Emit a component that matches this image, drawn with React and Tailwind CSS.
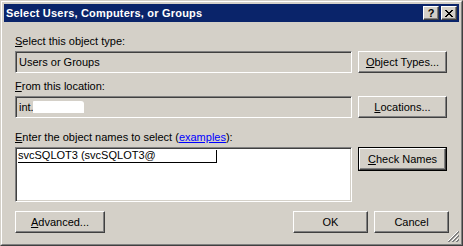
const raised =
  "border border-t-white border-l-white border-r-[#404040] border-b-[#404040] shadow-[inset_-1px_-1px_#808080] bg-[#d4d0c8]";
const sunken =
  "border border-t-[#808080] border-l-[#808080] border-r-white border-b-white shadow-[inset_1px_1px_#404040,inset_-1px_-1px_#d4d0c8]";

const Key = ({ children }) => <span className="underline underline-offset-[1px]">{children}</span>;

const Button = ({ children, className = "" }) => (
  <button
    type="button"
    className={`${raised} h-[22px] flex items-center justify-center text-black ${className}`}
  >
    {children}
  </button>
);

const CaptionButton = ({ children }) => (
  <div className={`${raised} w-[16px] h-[14px] flex items-center justify-center`}>{children}</div>
);

export default function App() {
  return (
    <div className="w-[463px] h-[246px] bg-[#d4d0c8] font-['Liberation_Sans',Arial,sans-serif] text-[11px] leading-[13px] text-black select-none">
      {/* window frame */}
      <div className="w-full h-full border border-t-[#d4d0c8] border-l-[#d4d0c8] border-r-[#404040] border-b-[#404040]">
        <div className="w-full h-full border border-t-white border-l-white border-r-[#808080] border-b-[#808080] p-[2px] flex flex-col">
          {/* Title bar */}
          <div className="h-[18px] bg-[#0a246a] flex items-center pl-[2px] pr-[2px]">
            <span className="text-white font-bold text-[11px] tracking-[0.2px]">
              Select Users, Computers, or Groups
            </span>
            <div className="ml-auto flex gap-[2px]">
              <CaptionButton>
                <span className="font-bold text-[11px] leading-none mt-[1px]">?</span>
              </CaptionButton>
              <CaptionButton>
                <svg width="8" height="7" viewBox="0 0 8 7" shapeRendering="crispEdges">
                  <path
                    d="M0 0h2v1H0zM6 0h2v1H6zM1 1h2v1H1zM5 1h2v1H5zM2 2h4v1H2zM3 3h2v1H3zM2 4h4v1H2zM1 5h2v1H1zM5 5h2v1H5zM0 6h2v1H0zM6 6h2v1H6z"
                    fill="#000"
                  />
                </svg>
              </CaptionButton>
            </div>
          </div>

          {/* Body */}
          <div className="relative flex-1 pl-[11px] pr-[10px]">
            {/* object type */}
            <div className="mt-[13px]">
              <Key>S</Key>elect this object type:
            </div>
            <div className="mt-[3px] flex gap-[6px]">
              <div className={`${sunken} w-[337px] h-[22px] flex items-center pl-[3px] bg-[#d4d0c8]`}>
                Users or Groups
              </div>
              <Button className="w-[89px]">
                <Key>O</Key>bject Types...
              </Button>
            </div>

            {/* location */}
            <div className="mt-[7px]">
              <Key>F</Key>rom this location:
            </div>
            <div className="mt-[3px] flex gap-[6px]">
              <div className={`${sunken} w-[337px] h-[22px] flex items-center pl-[3px] bg-[#d4d0c8]`}>
                int.
                <span className="inline-block w-[51px] h-[12px] bg-white rounded-tr-[3px] rounded-tl-[1px] -ml-[1px]" />
              </div>
              <Button className="w-[89px]">
                <Key>L</Key>ocations...
              </Button>
            </div>

            {/* names */}
            <div className="mt-[13px]">
              <Key>E</Key>nter the object names to select (
              <span className="text-[#0000ff] underline underline-offset-[1px]">examples</span>):
            </div>
            <div className="mt-[3px] flex gap-[6px] items-start">
              <div className={`${sunken} w-[337px] h-[55px] bg-white pl-[2px] pt-[1px]`}>
                <span className="inline-flex items-end border-b border-black">
                  <span>svcSQLOT3 (svcSQLOT3@</span>
                  <span className="inline-block w-[60px] h-[13px]" />
                  <span className="inline-block w-[1px] h-[12px] bg-black" />
                </span>
              </div>
              <div className="border border-black">
                <Button className="w-[87px] h-[20px]">
                  <Key>C</Key>heck Names
                </Button>
              </div>
            </div>

            {/* footer buttons */}
            <div className="mt-[9px] flex">
              <Button className="w-[90px]">
                <Key>A</Key>dvanced...
              </Button>
              <Button className="w-[75px] ml-auto">OK</Button>
              <Button className="w-[75px] ml-[6px]">Cancel</Button>
            </div>

            {/* resize grip */}
            <svg
              className="absolute right-0 bottom-0"
              width="11"
              height="11"
              viewBox="0 0 11 11"
              shapeRendering="crispEdges"
            >
              <path d="M10 0L0 10M10 4L4 10M10 8L8 10" stroke="#fff" strokeWidth="1" />
              <path d="M11 0L0 11M11 1L1 11M11 4L4 11M11 5L5 11M11 8L8 11M11 9L9 11" stroke="#808080" strokeWidth="1" />
            </svg>
          </div>
        </div>
      </div>
    </div>
  );
}
